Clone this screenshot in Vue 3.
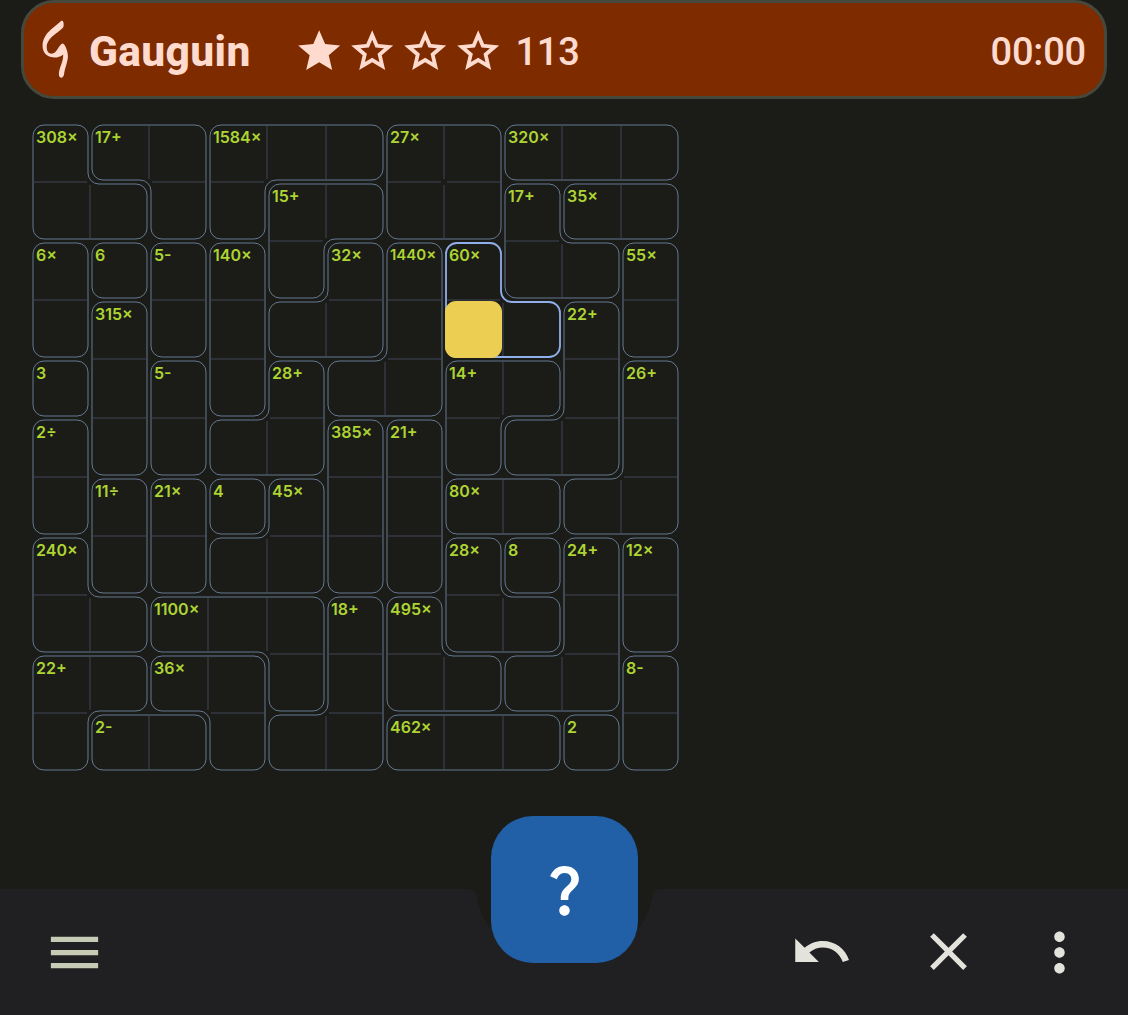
<script setup>
const PITCH = 59
const SIZE = 11
const INSET = 2
const RADIUS = 11

const layout = [
  'ABBCCCDDEEE',
  'AABCFFDDGHH',
  'IJKLFMNOGGP',
  'IQKLMMNOORP',
  'SQTLUNNVVRW',
  'XQTUUYZVRRW',
  'XabcdYZeeWW',
  'fabddYZghij',
  'ffkkklmggij',
  'nnooklmmiip',
  'nqqollrrrsp',
]

const labels = {
  A: '308×', B: '17+', C: '1584×', D: '27×', E: '320×', F: '15+', G: '17+', H: '35×',
  I: '6×', J: '6', K: '5-', L: '140×', M: '32×', N: '1440×', O: '60×', P: '55×',
  Q: '315×', R: '22+', S: '3', T: '5-', U: '28+', V: '14+', W: '26+', X: '2÷',
  Y: '385×', Z: '21+', a: '11÷', b: '21×', c: '4', d: '45×', e: '80×', f: '240×',
  g: '28×', h: '8', i: '24+', j: '12×', k: '1100×', l: '18+', m: '495×', n: '22+',
  o: '36×', p: '8-', q: '2-', r: '462×', s: '2',
}

const activeCage = 'O'
const selected = { row: 3, col: 7 }

const at = (r, c) => (layout[r] && layout[r][c]) || null

const seen = new Set()
const cells = []
for (let r = 0; r < SIZE; r++) {
  for (let c = 0; c < SIZE; c++) {
    const id = at(r, c)
    cells.push({
      key: `${r}-${c}`,
      label: seen.has(id) ? '' : labels[id],
      small: id === 'N',
      selected: r === selected.row && c === selected.col,
    })
    seen.add(id)
  }
}

// Walks the clockwise border of a cage, insets it and rounds every corner.
function outline(id) {
  const edges = new Map()
  const add = (x1, y1, x2, y2) => edges.set(`${x1},${y1}`, [x1, y1, x2, y2])
  for (let r = 0; r < SIZE; r++) {
    for (let c = 0; c < SIZE; c++) {
      if (at(r, c) !== id) continue
      if (at(r - 1, c) !== id) add(c, r, c + 1, r)
      if (at(r, c + 1) !== id) add(c + 1, r, c + 1, r + 1)
      if (at(r + 1, c) !== id) add(c + 1, r + 1, c, r + 1)
      if (at(r, c - 1) !== id) add(c, r + 1, c, r)
    }
  }
  const start = edges.values().next().value
  const loop = []
  let edge = start
  do {
    loop.push(edge)
    edge = edges.get(`${edge[2]},${edge[3]}`)
  } while (edge !== start)

  const dir = (e) => [e[2] - e[0], e[3] - e[1]]
  let d = ''
  loop.forEach((e, i) => {
    const [ax, ay] = dir(e)
    const [bx, by] = dir(loop[(i + 1) % loop.length])
    if (ax === bx && ay === by) return
    const x = e[2] * PITCH + INSET * (-ay - by)
    const y = e[3] * PITCH + INSET * (ax + bx)
    const sweep = ax * by - ay * bx > 0 ? 1 : 0
    d += `${d ? 'L' : 'M'}${x - ax * RADIUS} ${y - ay * RADIUS}`
    d += `A${RADIUS} ${RADIUS} 0 0 ${sweep} ${x + bx * RADIUS} ${y + by * RADIUS}`
  })
  return d + 'Z'
}

const cages = Object.keys(labels)
  .filter((id) => id !== activeCage)
  .map((id) => ({ id, d: outline(id) }))
const activeOutline = outline(activeCage)

let inner = ''
for (let r = 0; r < SIZE; r++) {
  for (let c = 0; c < SIZE; c++) {
    const x = c * PITCH
    const y = r * PITCH
    if (at(r, c) === at(r, c + 1)) inner += `M${x + PITCH} ${y + 3}V${y + 56}`
    if (at(r, c) === at(r + 1, c)) inner += `M${x + 3} ${y + PITCH}H${x + 56}`
  }
}

const star = 'M12 17.27L18.18 21l-1.64-7.03L22 9.24l-7.19-.61L12 2 9.19 8.63 2 9.24l5.46 4.73L5.82 21z'
const starOutline = star + 'M12 15.1L8.54 17.2l.92-3.94-3.05-2.65 4.03-.35L12 6.55l1.570 3.720 4.030.350-3.050 2.650.920 3.940z'
</script>

<template>
  <div class="screen">
    <header class="top">
      <svg class="logo" viewBox="0 0 32 60" width="32" height="60">
        <path d="M22 2C24 1 25 3 24.6 7C24 12 8 17 7.7 28C7.7 33 10 35 13.5 34.6C18 34 19.5 26 23.500 24.500C25.500 24.500 28.800 31 28.900 37C28.900 43 26 48 25 55.500C24.500 59.500 20.200 60 19.900 55.500C19.800 49 24.500 43 24.200 35.500C20 38.800 15.500 39.200 11 37.800C6 36 3.500 32 3.600 26.500C4 14 15 9 22 2Z" />
      </svg>
      <h1 class="title">Gauguin</h1>
      <div class="stars">
        <svg v-for="n in 4" :key="n" class="star" viewBox="0 0 24 24">
          <path fill-rule="evenodd" :d="n === 1 ? star : starOutline" />
        </svg>
      </div>
      <span class="score">113</span>
      <span class="time">00:00</span>
    </header>

    <main class="play">
      <div class="board">
        <svg class="lines" viewBox="0 0 649 649" width="649" height="649">
          <path class="inner" :d="inner" />
          <path v-for="cage in cages" :key="cage.id" class="cage" :d="cage.d" />
          <path class="cage active" :d="activeOutline" />
        </svg>
        <div v-for="cell in cells" :key="cell.key" class="cell" :class="{ selected: cell.selected }">
          <span v-if="cell.label" class="label" :class="{ small: cell.small }">{{ cell.label }}</span>
        </div>
      </div>
    </main>

    <footer class="bar">
      <svg class="notch" viewBox="0 0 201 80" width="201" height="80">
        <path d="M6 0C10 0 12 3 13 9C15 20 19.500 31 27 40L45 60H156L174 40C181.500 31 186 20 188 9C189 3 191 0 195 0Z" />
      </svg>
      <svg class="icon menu" viewBox="0 0 24 24"><path d="M3 18h18v-2H3v2zm0-5h18v-2H3v2zm0-7v2h18V6H3z" /></svg>
      <svg class="icon undo" viewBox="0 0 24 24"><path d="M12.500 8c-2.650 0-5.050.99-6.900 2.600L2 7v9h9l-3.620-3.620c1.390-1.160 3.160-1.880 5.120-1.880 3.540 0 6.550 2.310 7.600 5.500l2.370-.78C21.080 11.030 17.150 8 12.500 8z" /></svg>
      <svg class="icon close" viewBox="0 0 24 24"><path d="M19 6.410L17.590 5 12 10.590 6.410 5 5 6.410 10.590 12 5 17.590 6.410 19 12 13.410 17.590 19 19 17.590 13.410 12z" /></svg>
      <svg class="icon more" viewBox="0 0 24 24"><path d="M12 8c1.100 0 2-.9 2-2s-.9-2-2-2-2 .9-2 2 .9 2 2 2zm0 2c-1.100 0-2 .9-2 2s.9 2 2 2 2-.9 2-2-.9-2-2-2zm0 6c-1.100 0-2 .9-2 2s.9 2 2 2 2-.9 2-2-.9-2-2-2z" /></svg>
      <button class="fab" type="button">
        <svg viewBox="0 0 24 24" width="63" height="63">
          <path d="M11.070 12.850c.77-1.390 2.250-2.210 3.110-3.440.91-1.290.4-3.700-2.180-3.700-1.690 0-2.520 1.280-2.870 2.340L6.540 6.960C7.250 4.830 9.180 3 11.990 3c2.350 0 3.960 1.070 4.780 2.410.7 1.150 1.110 3.300.03 4.900-1.200 1.770-2.350 2.310-2.970 3.450-.25.46-.35.76-.35 2.240h-2.890c-.01-.78-.13-2.050.48-3.150zM14 20c0 1.100-.9 2-2 2s-2-.9-2-2 .9-2 2-2 2 .9 2 2z" />
        </svg>
      </button>
    </footer>
  </div>
</template>

<style>
body {
  margin: 0;
  background: #1b1c17;
}
</style>

<style scoped>
.screen {
  width: 1128px;
  height: 1015px;
  display: flex;
  flex-direction: column;
  overflow: hidden;
  background: #1b1c17;
  font-family: Roboto, "Liberation Sans", sans-serif;
}

.top {
  box-sizing: border-box;
  height: 99px;
  margin: 0 21px;
  padding: 4px 18px 0 15px;
  display: flex;
  align-items: center;
  border: 3px solid #46483b;
  border-radius: 33px;
  background: #7f2b00;
  color: #ffdbcf;
}

.logo {
  flex: none;
  margin-top: -5px;
  fill: #ffdbcf;
}

.title {
  width: 204.500px;
  margin: 0 0 0 18px;
  font-size: 42.500px;
  line-height: 50px;
  font-weight: 800;
  letter-spacing: 0.350px;
}

.stars {
  display: flex;
  gap: 2.800px;
}

.star {
  width: 50.400px;
  height: 50.400px;
  fill: #ffdbcf;
}

.score,
.time {
  font-size: 38px;
  line-height: 46px;
  font-weight: 500;
  letter-spacing: -0.200px;
}

.score {
  margin-left: 12px;
}

.time {
  margin-left: auto;
}

.play {
  height: 790px;
  box-sizing: border-box;
  padding: 24px 0 0 31px;
}

.board {
  position: relative;
  width: 649px;
  display: grid;
  grid-template-columns: repeat(11, 59px);
  grid-auto-rows: 59px;
}

.lines {
  position: absolute;
  inset: 0;
  fill: none;
}

.inner {
  stroke: #2d3037;
  stroke-width: 2;
}

.cage {
  stroke: #657994;
  stroke-width: 1;
}

.cage.active {
  stroke: #90afea;
  stroke-width: 1.800;
}

.cell {
  position: relative;
  box-sizing: border-box;
  padding: 4px 0 0 5px;
}

.cell.selected {
  margin: 1px;
  border-radius: 11px;
  background: #ecce53;
}

.label {
  display: block;
  color: #add433;
  font-family: Inter, sans-serif;
  font-size: 16px;
  line-height: 20px;
  font-weight: 600;
  white-space: nowrap;
}

.label.small {
  font-size: 15px;
}

.bar {
  position: relative;
  height: 126px;
  box-sizing: border-box;
  padding: 0 37px 0 43px;
  display: flex;
  align-items: center;
  background: #201f21;
}

.notch {
  position: absolute;
  left: 464px;
  top: 0;
  fill: #1b1c17;
}

.icon {
  flex: none;
  width: 63px;
  height: 63px;
  fill: #e4e3db;
}

.menu {
  fill: #c6cbb5;
}

.undo {
  margin-left: auto;
  margin-bottom: 2px;
}

.close {
  margin-left: 64px;
  margin-bottom: 2px;
}

.more {
  margin-left: 48px;
}

.fab {
  position: absolute;
  left: 491px;
  top: -73px;
  width: 147px;
  height: 147px;
  padding: 0;
  display: flex;
  align-items: center;
  justify-content: center;
  border: 0;
  border-radius: 42px;
  background: #2160a6;
}

.fab svg {
  fill: #fff;
}
</style>
